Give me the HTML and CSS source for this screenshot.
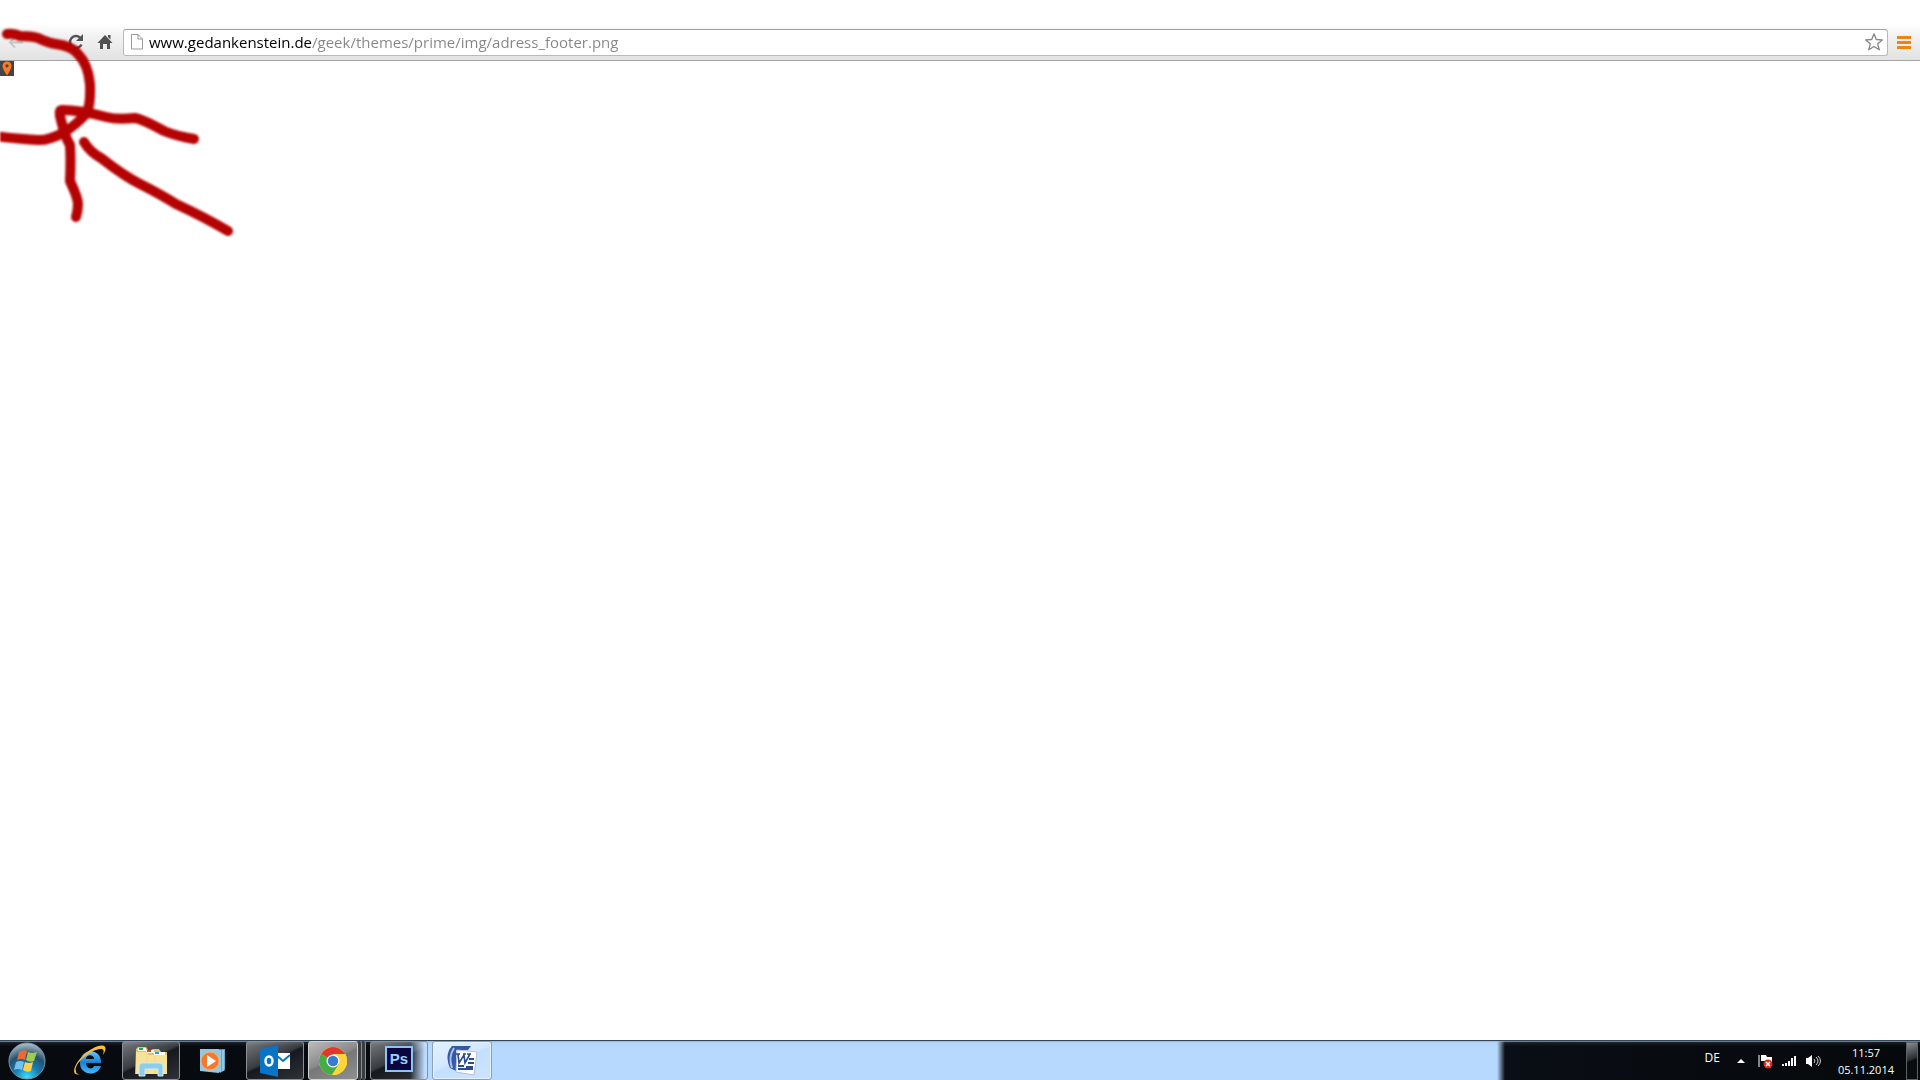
FILE: index.html
```html
<!DOCTYPE html>
<html lang="de">
<head>
  <meta charset="UTF-8">
  <title>adress_footer.png</title>
  <link rel="stylesheet" href="styles.css">
</head>
<body class="screen">
  <header class="toolbar">
    <nav class="nav-buttons">
      <button type="button" class="tool" aria-label="Zurück">
        <svg width="20" height="20" viewBox="0 0 20 20"><path d="M9 5l-5 5.500 5 5M4 10.500h13" fill="none" stroke="#c6c6c6" stroke-width="2"/></svg>
      </button>
      <button type="button" class="tool" aria-label="Vorwärts">
        <svg width="20" height="20" viewBox="0 0 20 20"><path d="M11 4l4 5-4 4M15 9H3" fill="none" stroke="#d2d2d2" stroke-width="2"/></svg>
      </button>
      <button type="button" class="tool" aria-label="Neu laden">
        <svg width="20" height="20" viewBox="0 0 20 20"><path d="M15.500 12.500A6 6 0 1 1 14 5.600" fill="none" stroke="#555" stroke-width="2.500"/><path d="M17 2v7h-7z" fill="#555"/></svg>
      </button>
      <button type="button" class="tool" aria-label="Startseite">
        <svg width="20" height="20" viewBox="0 0 20 20"><path d="M9 3l7.500 8H14v6h-3v-5H7v5H4v-6H1.500zM12 3h2.500v4.500L12 5z" fill="#505050"/></svg>
      </button>
    </nav>
    <div class="address">
      <svg width="12" height="16" viewBox="0 0 12 16"><path d="M.5 .5h6.500l4.500 4.500v10H.5zM7 .5V5h4.500" fill="#fff" stroke="#999"/></svg>
      <input type="text" class="url" aria-label="Adresse" value="www.gedankenstein.de/geek/themes/prime/img/adress_footer.png">
      <button type="button" class="star" aria-label="Lesezeichen">
        <svg width="20" height="20" viewBox="0 0 20 20"><path d="M10 1.800l2.300 5.700 6 .4-4.600 3.900 1.600 6L10 14.500l-5.300 3.300 1.600-6L1.700 7.900l6-.4z" fill="#fff" stroke="#858585" stroke-width="1.300" stroke-linejoin="round"/></svg>
      </button>
    </div>
    <button type="button" class="menu" aria-label="Menü">
      <svg width="14" height="14" viewBox="0 0 14 14"><path d="M0 2.500h14M0 7.500h14M0 12.500h14" stroke="#ee8412" stroke-width="3"/></svg>
    </button>
  </header>

  <main class="page">
    <svg class="marker" width="14" height="15" viewBox="0 0 14 15"><path fill="#444" d="M0 0h14v15H0z"/><path d="M7 .5a4.500 4.500 0 0 0-4.500 4.500C2.500 8 5 11 7 14.500c2-3.500 4.500-6.500 4.500-9.500A4.500 4.500 0 0 0 7 .5z" fill="#ff7920"/><circle cx="7" cy="4.800" r="1.600" fill="#444"/></svg>
  </main>

  <footer class="taskbar">
    <div class="tasks">
      <button type="button" class="task" aria-label="Start">
        <svg width="40" height="38" viewBox="0 0 40 38">
          <defs><radialGradient id="orb" cx=".5" cy=".95" r=".95"><stop offset="0" stop-color="#3fe0fa"/><stop offset=".35" stop-color="#1580b4"/><stop offset=".65" stop-color="#24506f"/><stop offset="1" stop-color="#b4c2cb"/></radialGradient></defs>
          <circle cx="19" cy="19" r="18" fill="url(#orb)" stroke="#789aad"/>
          <path d="M11 10q4-3 8-1l-2 9q-4-2-8 0z" fill="#ea6a32"/>
          <path d="M20 10q4 2 9 0l-3 9q-4 2-8-1z" fill="#a0cb4c"/>
          <path d="M8 20q4-2 8 0l-2 8q-4-2-8 0z" fill="#75c0ec"/>
          <path d="M17 20q4 2 8 0l-2 9q-4 2-8-1z" fill="#ffd04a"/>
        </svg>
      </button>
      <button type="button" class="task" aria-label="Internet Explorer">
        <svg width="36" height="34" viewBox="0 0 36 34">
          <defs><linearGradient id="ie" x2="0" y2="1"><stop offset="0" stop-color="#66c9ff"/><stop offset=".5" stop-color="#1682dc"/><stop offset="1" stop-color="#48b7f5"/></linearGradient></defs>
          <path d="M30 19H15c0 6 7 7 8 3h7c-4 12-22 9-21-4C10 3 31 4 30 19zM15 15h8c0-5-8-5-8 0z" fill="url(#ie)"/>
          <path d="M9 30c-9 3-7-9 2-17C18 5 29 0 33 2c3 2 1 6-1 9 1-4 1-6-2-6C23 4 2 19 5 27c0 3 2 3 4 3z" fill="#f9bf38"/>
        </svg>
      </button>
      <button type="button" class="task open" aria-label="Explorer">
        <svg width="34" height="32" viewBox="0 0 34 32">
          <path d="M2 4l2-2h8l2 3h3l2-1h6l2 3h6v22H1z" fill="#e3c264"/>
          <path d="M4 3h8v3H4zM12 5h8v3h-8zM20 7h11v3H20z" fill="#fffdf0"/>
          <path d="M5 3h4v2H5z" fill="#28ab35"/><path d="M13 5h4v2h-4z" fill="#d7432e"/><path d="M21 7h4v2h-4z" fill="#3399dc"/>
          <path d="M2 7h11l2 3h18v19H2z" fill="#f7e29a"/><path d="M13 8v20M21 10v18" stroke="#efd78a"/>
          <path d="M5 31V21q0-3 3-3h17q4 0 4 3v10h-5v-7H11v7z" fill="#8fcbea" stroke="#cceaf8"/>
        </svg>
      </button>
      <button type="button" class="task" aria-label="Media Player">
        <svg width="28" height="26" viewBox="0 0 28 26">
          <path d="M5 2l21-1v21l-5 3z" fill="#62a8c9"/><path d="M1 1h19v24L1 23z" fill="#91c9e3"/><path d="M21 2v22M24 2v21" stroke="#c7e8f4"/>
          <circle cx="11" cy="13" r="9" fill="#f4792c" stroke="#ffad72"/><path d="M8 7l9 6-9 6z" fill="#fff"/>
        </svg>
      </button>
      <button type="button" class="task open" aria-label="Outlook">
        <svg width="32" height="32" viewBox="0 0 32 32">
          <path d="M17 8h14v16H17z" fill="#fff"/><path d="M17 10l7 6 7-6" fill="none" stroke="#0874c5" stroke-width="2"/>
          <path d="M1 4l18-4v32L1 28z" fill="#0874c5"/><ellipse cx="10" cy="16" rx="3.500" ry="4.500" fill="none" stroke="#fff" stroke-width="2.500"/>
        </svg>
      </button>
      <div class="group">
        <button type="button" class="task open active" aria-label="Chrome">
          <svg width="28" height="28" viewBox="0 0 28 28">
            <circle cx="14" cy="14" r="14" fill="#ffd43b"/>
            <path d="M14 14L2 7a14 14 0 0 1 24.200 0z" fill="#e1372c"/>
            <path d="M1.900 7A14 14 0 0 0 13 28l7-11-6-3z" fill="#45ad48"/>
            <path d="M14 7h12.200A14 14 0 0 1 13 28l7-11z" fill="#ffd43b"/>
            <circle cx="14" cy="14" r="6.500" fill="#fff"/><circle cx="14" cy="14" r="5.200" fill="#397bd0"/>
          </svg>
        </button>
        <span class="stack"></span>
        <span class="stack"></span>
      </div>
      <button type="button" class="task open photoshop" aria-label="Photoshop"><span class="ps">Ps</span></button>
      <button type="button" class="task open word" aria-label="Word">
        <svg width="34" height="32" viewBox="0 0 34 32">
          <path d="M7 1h19l-3 4H11v21l-6-3Q-1 10 7 1z" fill="#3559a5"/><path d="M9 3Q3 12 7 23" fill="none" stroke="#a9c2ea" stroke-width="2"/>
          <path d="M12 5l20 2-3 23-18-3z" fill="#fff" stroke="#b3c1d6"/>
          <path d="M11 9h4M18 9h3M13 9l1 9 5-8 1 8 5-9M22 9h4" fill="none" stroke="#2b4b94" stroke-width="1.600"/>
          <path d="M24 14h5M23 18h6M21 22h7M13 21h6M13 24h15" stroke="#2b4b94" stroke-width="2"/>
        </svg>
      </button>
    </div>
    <div class="tray">
      <span class="lang">DE</span>
      <button type="button" class="tray-icon" aria-label="Ausgeblendete Symbole">
        <svg width="16" height="16" viewBox="0 0 16 16"><path d="M4 10l4-4 4 4z" fill="#fff"/></svg>
      </button>
      <button type="button" class="tray-icon" aria-label="Wartungscenter">
        <svg width="16" height="16" viewBox="0 0 16 16"><path d="M2 2v12" stroke="#fff"/><path d="M4 2h5l1 2h5v6H9L8 8H4z" fill="#fff"/><circle cx="11" cy="11" r="4.500" fill="#e1251e"/><path d="M9 9l4 4M13 9l-4 4" stroke="#fff" stroke-width="1.500"/></svg>
      </button>
      <button type="button" class="tray-icon" aria-label="Netzwerk">
        <svg width="16" height="16" viewBox="0 0 16 16"><path d="M2 11v2M5 10v3M8 8v5M11 5v8M14 3v10" stroke="#fff" stroke-width="2"/></svg>
      </button>
      <button type="button" class="tray-icon" aria-label="Lautstärke">
        <svg width="16" height="16" viewBox="0 0 16 16"><path d="M1 5h2l4-3v12l-4-3H1z" fill="#fff"/><path d="M9 6q2 2 0 4M11 4q4 4 0 8M13 3q5 5 0 10" fill="none" stroke="#ccc"/></svg>
      </button>
      <div class="clock"><span>11:57</span><span>05.11.2014</span></div>
      <button type="button" class="show-desktop" aria-label="Desktop anzeigen"></button>
    </div>
  </footer>

  <!-- red marker strokes drawn over the window -->
  <svg class="scribble" width="250" height="250" viewBox="0 0 250 250">
    <path d="M7 34Q14 33 20 36Q31 36 38 38Q48 43 56 44Q72 46 78 54Q88 64 90 84Q91 108 85 115Q76 125 63 133Q47 141 38 140Q20 139 -6 136"/>
    <path d="M194 139Q176 136 164 131Q142 119 135 118Q117 120 106 117Q80 110 62 110Q58 110 61 120Q65 137 70 145Q71 160 70 181Q78 198 78 204Q78 210 76 217"/>
    <path d="M84 142Q90 152 101 158Q124 176 140 184Q160 194 176 204Q204 217 228 231"/>
  </svg>
</body>
</html>
```
FILE: styles.css
```css
.screen {
  margin: 0;
  min-height: 100vh;
  display: flex;
  flex-direction: column;
  background: #fff;
  font-family: "Open Sans", sans-serif;
}

button {
  display: flex;
  align-items: center;
  justify-content: center;
  padding: 0;
  border: none;
  background: none;
}

/* browser toolbar */
.toolbar {
  display: flex;
  align-items: center;
  box-sizing: border-box;
  height: 37px;
  margin-top: 24px;
  background: linear-gradient(#fff, #f3f3f3 30%, #e2e2e2);
  border-bottom: 1px solid #a5a5a5;
}

.nav-buttons {
  display: flex;
  padding: 0 2px 0 1px;
}

.tool {
  width: 30px;
  height: 28px;
}

.address {
  display: flex;
  flex: 1;
  align-items: center;
  gap: 6px;
  box-sizing: border-box;
  height: 27px;
  padding: 0 3px 0 7px;
  background: #fff;
  border: 1px solid #b9b9b9;
  border-top-color: #a0a0a0;
  border-radius: 3px;
}

/* host name in black, path in grey */
.url {
  flex: 1;
  height: 24px;
  padding: 0;
  border: none;
  outline: none;
  font-family: inherit;
  font-size: 15px;
  background: linear-gradient(to right, #000 163px, #858585 163px);
  -webkit-background-clip: text;
  background-clip: text;
  -webkit-text-fill-color: transparent;
}

.menu {
  width: 32px;
  height: 28px;
}

.page {
  flex: 1;
}

.marker {
  display: block;
}

/* windows taskbar */
.taskbar {
  display: flex;
  justify-content: space-between;
  box-sizing: border-box;
  height: 40px;
  border-top: 1px solid #34475a;
  background:
    linear-gradient(rgba(150, 175, 200, 0.7) 1px, rgba(150, 175, 200, 0.15) 1px, transparent 5px),
    linear-gradient(to right, #070b10 410px, #b7d9fd 425px, #b7d9fd calc(100% - 423px), #0a0e15 calc(100% - 415px), #05090b);
}

.tasks {
  display: flex;
  gap: 4px;
}

.task {
  width: 58px;
  height: 39px;
}

.task:first-child {
  width: 56px;
}

.open {
  box-sizing: border-box;
  border: 1px solid #8c9095;
  border-radius: 3px;
  background: linear-gradient(155deg, rgba(255, 255, 255, 0.45), rgba(255, 255, 255, 0.2) 45%, rgba(255, 255, 255, 0.06) 50%, rgba(255, 255, 255, 0.16));
}

.group {
  display: flex;
  width: 58px;
}

.group .active {
  width: 50px;
  border-color: #d0d2d4;
  background: linear-gradient(155deg, #bbb, #8b8b8b 45%, #777 50%, #909090);
}

.stack {
  box-sizing: border-box;
  width: 4px;
  border-right: 1px solid #8c9095;
  background: #3a3d40;
  border-radius: 0 3px 3px 0;
}

.photoshop {
  padding-bottom: 4px;
}

.word {
  width: 60px;
  border-color: #8c9fb4;
  background: linear-gradient(155deg, #e4f1ff, #d2e7ff 45%, #c3dfff 50%, #cde5ff);
  box-shadow: inset 0 0 0 1px #e4f1ff;
}

.ps {
  box-sizing: border-box;
  width: 28px;
  height: 26px;
  border: 2px solid #8ac5f4;
  background: #0b0640;
  color: #9bd0f8;
  font-size: 15px;
  font-weight: 600;
  line-height: 21px;
}

.tray {
  display: flex;
  align-items: center;
  gap: 8px;
  padding-right: 2px;
  color: #fff;
}

.lang {
  padding: 0 5px 6px 0;
  font-size: 12px;
}

.clock {
  display: flex;
  flex-direction: column;
  align-items: center;
  padding: 0 4px 0 9px;
  font-size: 11px;
  line-height: 17px;
}

.show-desktop {
  box-sizing: border-box;
  width: 12px;
  height: 38px;
  border: 1px solid #5c6165;
  background: linear-gradient(160deg, #8a8d90, #2a2d30 45%, #0a0d10 50%);
}

.scribble {
  position: absolute;
  top: 0;
  left: 0;
  pointer-events: none;
  fill: none;
  stroke: #b50202;
  stroke-width: 10px;
  stroke-linecap: round;
  stroke-linejoin: round;
  filter: blur(1px);
}
```
